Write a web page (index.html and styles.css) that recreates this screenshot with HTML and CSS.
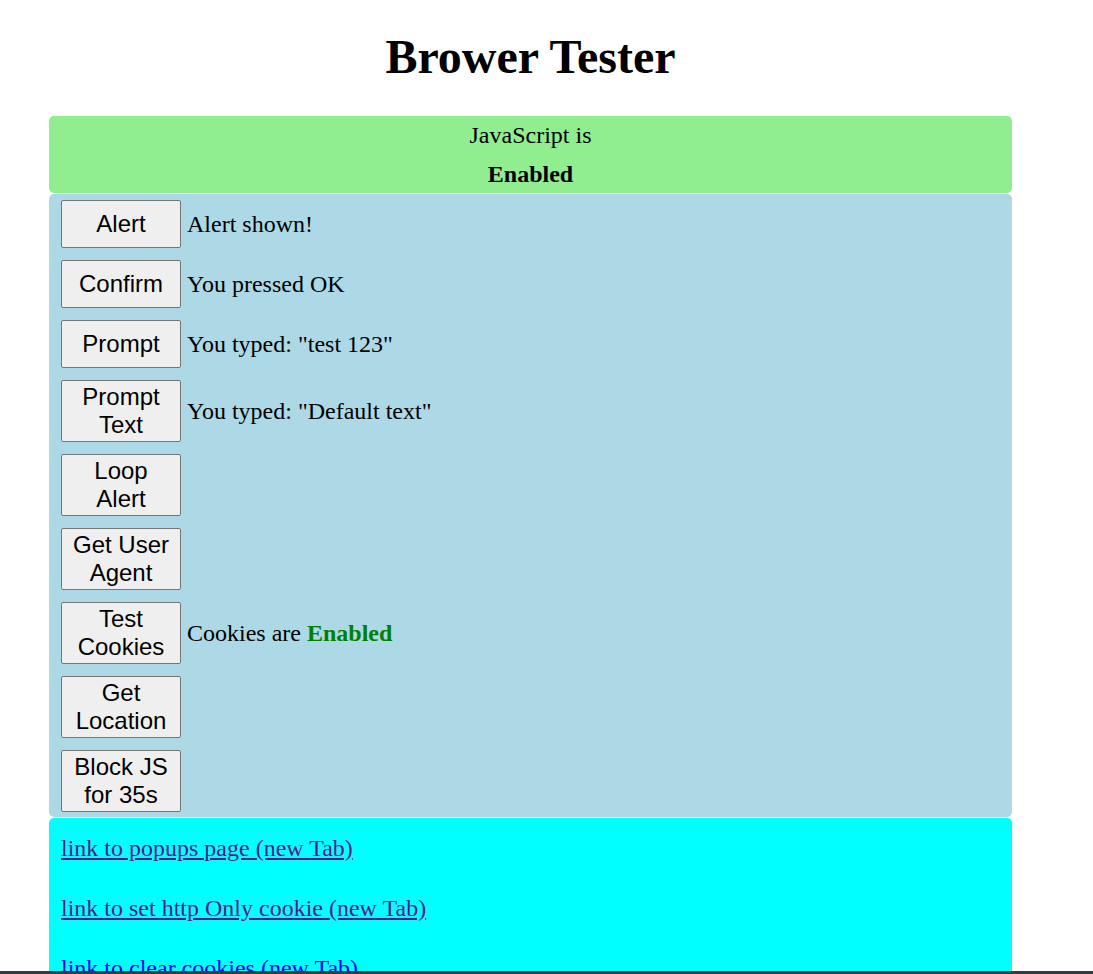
FILE: index.html
```html
<!DOCTYPE html>
<html lang="en">
<head>
<meta charset="utf-8">
<title>Brower Tester</title>
<link rel="stylesheet" href="styles.css">
</head>
<body>
<div class="page">
  <h1 class="title">Brower Tester</h1>
  <div class="status">
    <div class="status-line">JavaScript is</div>
    <div class="status-line"><b>Enabled</b></div>
  </div>
  <div class="actions">
    <div class="row"><button class="btn">Alert</button><span class="result">Alert shown!</span></div>
    <div class="row"><button class="btn">Confirm</button><span class="result">You pressed OK</span></div>
    <div class="row"><button class="btn">Prompt</button><span class="result">You typed: "test 123"</span></div>
    <div class="row"><button class="btn">Prompt Text</button><span class="result">You typed: "Default text"</span></div>
    <div class="row"><button class="btn">Loop Alert</button></div>
    <div class="row"><button class="btn">Get User Agent</button></div>
    <div class="row"><button class="btn">Test Cookies</button><span class="result">Cookies are <b class="ok">Enabled</b></span></div>
    <div class="row"><button class="btn">Get Location</button></div>
    <div class="row"><button class="btn">Block JS for 35s</button></div>
  </div>
  <div class="links">
    <a class="link visited" href="#">link to popups page (new Tab)</a>
    <a class="link visited" href="#">link to set http Only cookie (new Tab)</a>
    <a class="link" href="#">link to clear cookies (new Tab)</a>
    <a class="link" href="#">link to test page (new Tab)</a>
  </div>
</div>
<div class="bottom-bar"></div>
</body>
</html>
```

FILE: styles.css
```css
html {
  overflow: hidden;
}
body {
  margin: 0;
  font-family: "Liberation Serif", "Times New Roman", serif;
  font-size: 24px;
  color: #000;
  background: #fff;
}
.page {
  width: 963px;
  margin-left: 49px;
}
.title {
  margin: 29px 0 32px;
  font-size: 48px;
  font-weight: bold;
  text-align: center;
  line-height: 55px;
}
.status {
  background: #90ee90;
  border-radius: 5px;
  text-align: center;
  padding: 5px 0 5px;
  display: flex;
  flex-direction: column;
  gap: 11px;
  line-height: 28px;
}
.actions {
  background: #add8e6;
  border-radius: 5px;
  margin-top: 1px;
  padding: 6px 12px 5px;
  display: flex;
  flex-direction: column;
  gap: 12px;
}
.row {
  display: flex;
  align-items: center;
  gap: 6px;
}
.btn {
  width: 120px;
  min-height: 48px;
  margin: 0;
  padding: 2px 6px;
  font-family: "Liberation Sans", Arial, sans-serif;
  font-size: 24px;
  line-height: 28px;
  color: #000;
  background: #efefef;
  border: 1px solid #767676;
  border-radius: 2px;
  flex: none;
}
.result {
  line-height: 28px;
}
.ok {
  color: #008000;
}
.links {
  background: #00ffff;
  border-radius: 5px;
  margin-top: 1px;
  padding: 16px 12px 40px;
  display: flex;
  flex-direction: column;
  align-items: flex-start;
  gap: 32px;
  line-height: 28px;
}
.link {
  color: #0000ee;
}
.link.visited {
  color: #551a8b;
}
.bottom-bar {
  position: fixed;
  left: 0;
  right: 0;
  bottom: 0;
  height: 3px;
  background: #2f3e3e;
}
```
